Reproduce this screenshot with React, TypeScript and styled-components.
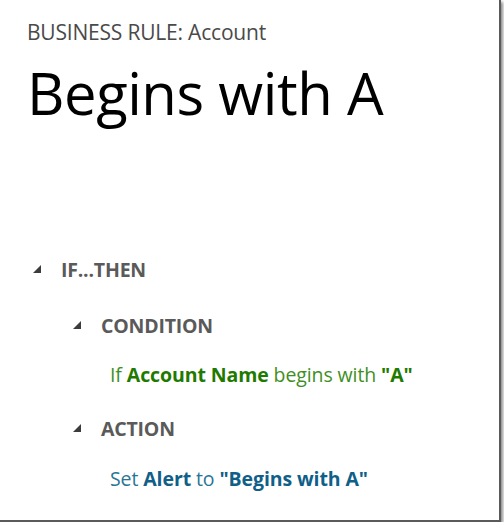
import React from "react";
import styled, { createGlobalStyle } from "styled-components";

const Global = createGlobalStyle`
  html, body { margin: 0; padding: 0; background: #ffffff; }
  body { font-family: "Open Sans", "Noto Sans", sans-serif; }
`;

const Frame = styled.div`
  width: 501px;
  height: 522px;
  box-sizing: border-box;
  background: #ffffff;
  border-right: 2px solid #5a5a5a;
  border-bottom: 2px solid #5a5a5a;
  box-shadow: 2px 2px 3px rgba(0, 0, 0, 0.45);
  display: flex;
  flex-direction: column;
  padding: 19px 0 0 27px;
`;

const Subtitle = styled.div`
  font-size: 21px;
  line-height: 26px;
  color: #4a4a4a;
  letter-spacing: -0.2px;
`;

const Title = styled.h1`
  margin: 12px 0 0 0;
  font-weight: 400;
  font-size: 58px;
  line-height: 72px;
  color: #000000;
  letter-spacing: -0.45px;
`;

const Tree = styled.div`
  margin-top: 127px;
  display: flex;
  flex-direction: column;
`;

const NodeRow = styled.div<{ $indent: number; $top: number }>`
  display: flex;
  align-items: center;
  height: 26px;
  margin-top: ${(p) => p.$top}px;
  padding-left: ${(p) => p.$indent}px;
  gap: 20px;
`;

const Label = styled.span`
  font-weight: 700;
  font-size: 19.5px;
  color: #5a5a5a;
  letter-spacing: -0.2px;
`;

const Statement = styled.div<{ $tone: "green" | "blue"; $top: number }>`
  margin-top: ${(p) => p.$top}px;
  padding-left: 83px;
  height: 26px;
  display: flex;
  align-items: center;
  font-size: 19.5px;
  letter-spacing: -0.1px;
  white-space: pre;
  color: ${(p) => (p.$tone === "green" ? "#3f8f1f" : "#2a7496")};
  b {
    font-weight: 700;
    color: ${(p) => (p.$tone === "green" ? "#1f7a00" : "#0f5f88")};
  }
`;

const Expander = () => (
  <svg width="8" height="8" viewBox="0 0 8 8" style={{ flex: "none" }}>
    <polygon points="8,0 8,8 0,8" fill="#3c3c3c" />
  </svg>
);

export default function App() {
  return (
    <>
      <Global />
      <Frame>
        <Subtitle>BUSINESS RULE: Account</Subtitle>
        <Title>Begins with A</Title>
        <Tree>
          <NodeRow $indent={6} $top={0}>
            <Expander />
            <Label>IF...THEN</Label>
          </NodeRow>
          <NodeRow $indent={46} $top={30}>
            <Expander />
            <Label>CONDITION</Label>
          </NodeRow>
          <Statement $tone="green" $top={23}>
            If <b>Account Name</b> begins with <b>"A"</b>
          </Statement>
          <NodeRow $indent={46} $top={28}>
            <Expander />
            <Label>ACTION</Label>
          </NodeRow>
          <Statement $tone="blue" $top={24}>
            Set <b>Alert</b> to <b>"Begins with A"</b>
          </Statement>
        </Tree>
      </Frame>
    </>
  );
}
